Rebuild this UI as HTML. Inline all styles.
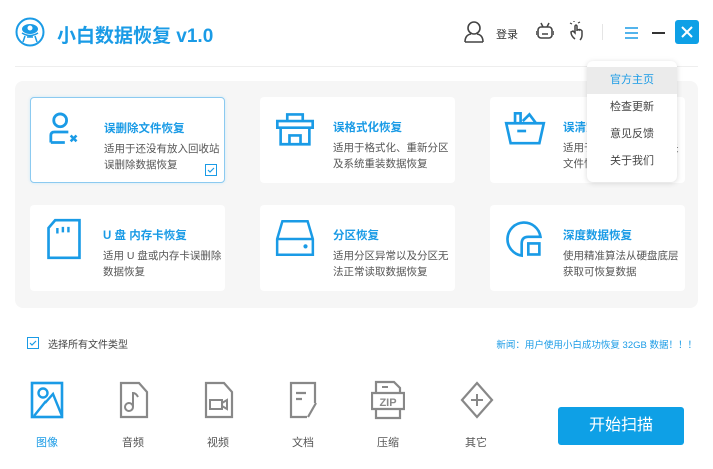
<!DOCTYPE html>
<html><head><meta charset="utf-8"><style>
*{margin:0;padding:0;box-sizing:border-box}
body{width:713px;height:469px;background:#fff;font-family:"Liberation Sans","Noto Sans CJK SC",sans-serif;position:relative;overflow:hidden;color:#333}
.a{position:absolute}
.title{left:57px;top:21px;font-size:19px;font-weight:bold;color:#1a9be6;letter-spacing:0px}
.sep{left:15px;top:66px;width:683px;height:1px;background:#eee}
.panel{left:15px;top:81px;width:683px;height:227px;background:#f6f6f6;border-radius:8px}
.card{position:absolute;width:195px;height:86px;background:#fff;border-radius:4px}
.card.sel{border:1px solid #8ccaf0;box-shadow:0 0 3px #cde8f8}
.card svg{position:absolute;left:14px;top:13px}
.card .t{position:absolute;left:73px;top:22px;font-size:11.5px;color:#1a9be6;font-weight:bold}
.card .d{position:absolute;left:73px;top:43px;font-size:10.5px;color:#555;line-height:16px;width:120px}
.menu{left:587px;top:61px;width:90px;height:121px;background:#fff;border-radius:6px;box-shadow:0 1px 6px rgba(0,0,0,.15)}
.menu div{height:27px;line-height:27px;text-align:center;font-size:11px;color:#444}
.ft{position:absolute;font-size:11px;color:#555;width:60px;text-align:center;top:434px}
.btn{left:558px;top:407px;width:126px;height:38px;background:#0ea0e6;border-radius:3px;color:#fff;font-size:16px;text-align:center;line-height:38px}
</style></head><body>
<svg class="a" style="left:15px;top:17px" width="30" height="30" viewBox="0 0 30 30"><circle cx="15" cy="15" r="13.5" fill="#fff" stroke="#1a9be6" stroke-width="2"/><ellipse cx="15" cy="12" rx="8" ry="5" fill="#1a9be6"/><circle cx="15" cy="11" r="2.5" fill="#fff"/><path d="M7 16q8 5 16 0M10 19l-2 6M20 19l2 6M12 20h6" stroke="#1a9be6" stroke-width="1.5" fill="none"/></svg>
<div class="a title">小白数据恢复 v1.0</div>
<svg class="a" style="left:463px;top:20px" width="22" height="24" viewBox="0 0 22 24"><circle cx="11" cy="8" r="6" fill="none" stroke="#444" stroke-width="1.6"/><path d="M2 22q0-7 6-8M20 22q0-7-6-8M2 22h18" fill="none" stroke="#444" stroke-width="1.6"/></svg>
<div class="a" style="left:496px;top:26px;font-size:11px;color:#333">登录</div>
<svg class="a" style="left:536px;top:22px" width="18" height="19" viewBox="0 0 18 19"><path d="M5 1l2 4M13 1l-2 4" stroke="#444" stroke-width="1.5"/><rect x="2" y="5" width="14" height="11" rx="3" fill="none" stroke="#444" stroke-width="1.6"/><path d="M0 9v4M18 9v4M6 12h6" stroke="#444" stroke-width="1.6"/></svg>
<svg class="a" style="left:569px;top:21px" width="16" height="20" viewBox="0 0 16 20"><path d="M6 18q-4-3-4-7l2-1 2 2V5q1-2 2 0v5q0-2 2-1 0-1 2 0l1 1v4q0 3-2 5" fill="none" stroke="#444" stroke-width="1.5"/><path d="M3 3l-2-1M5 1v-1M9 2l2-1" stroke="#444" stroke-width="1.2"/></svg>
<div class="a" style="left:602px;top:24px;width:1px;height:16px;background:#e5e5e5"></div>
<svg class="a" style="left:625px;top:27px" width="13" height="12"><path d="M0 1h13M0 6h13M0 11h13" stroke="#1a9be6" stroke-width="1.6"/></svg>
<div class="a" style="left:652px;top:32px;width:13px;height:2px;background:#333"></div>
<div class="a" style="left:675px;top:20px;width:24px;height:24px;background:#0ea0e6;border-radius:3px"><svg width="24" height="24"><path d="M7 7l10 10M17 7L7 17" stroke="#fff" stroke-width="2"/></svg></div>
<div class="a sep"></div>
<div class="a panel">
<div class="card sel" style="left:15px;top:16px"><svg width="42" height="42" viewBox="0 0 36 36"><circle cx="13" cy="8" r="5.5" fill="none" stroke="#1a9be6" stroke-width="2.4"/><path d="M5 27v-6q0-3 3-3h12M5 27h12" fill="none" stroke="#1a9be6" stroke-width="2.4"/><path d="M22 21l5 5M27 21l-5 5" stroke="#1a9be6" stroke-width="2.2"/></svg><div class="t">误删除文件恢复</div><div class="d">适用于还没有放入回收站误删除数据恢复</div><svg style="left:174px;top:66px" width="12" height="12"><rect x=".5" y=".5" width="11" height="11" fill="none" stroke="#1a9be6"/><path d="M3 6l2 2 4-4" fill="none" stroke="#1a9be6" stroke-width="1.2"/></svg></div>
<div class="card" style="left:245px;top:16px"><svg width="42" height="42" viewBox="0 0 38 38"><path d="M12 4h14v6h9v6h-3v15H6V16H3v-6h9zM12 10h14M6 16h26M14 31v-8h10v8" fill="none" stroke="#1a9be6" stroke-width="2.4"/></svg><div class="t">误格式化恢复</div><div class="d">适用于格式化、重新分区及系统重装数据恢复</div></div>
<div class="card" style="left:475px;top:16px"><svg width="42" height="42" viewBox="0 0 38 38"><path d="M2 12h34l-4 18H6zM10 12V3h5v9M17 10l6-6 6 8" fill="none" stroke="#1a9be6" stroke-width="2.4"/><path d="M12 19h8" stroke="#1a9be6" stroke-width="2.4"/></svg><div class="t">误清空回收站</div><div class="d">适用于清空回收站后丢失文件恢复</div></div>
<div class="card" style="left:15px;top:124px"><svg width="40" height="42" viewBox="0 0 36 38"><path d="M10 2h22v34H4V9z" fill="none" stroke="#1a9be6" stroke-width="2.4"/><path d="M12 9v5M17 8v5M22 8v5" stroke="#1a9be6" stroke-width="2.2"/></svg><div class="t">U 盘 内存卡恢复</div><div class="d">适用 U 盘或内存卡误删除数据恢复</div></div>
<div class="card" style="left:245px;top:124px"><svg width="42" height="40" viewBox="0 0 40 38"><path d="M8 3h24l5 17v15H3V20zM3 20h34" fill="none" stroke="#1a9be6" stroke-width="2.4"/><circle cx="30" cy="27" r="2" fill="#1a9be6"/></svg><div class="t">分区恢复</div><div class="d">适用分区异常以及分区无法正常读取数据恢复</div></div>
<div class="card" style="left:475px;top:124px"><svg width="42" height="42" viewBox="0 0 38 38"><path d="M16 34A15 15 0 1 1 33 17H22q-6 0-6 6z" fill="none" stroke="#1a9be6" stroke-width="2.4"/><rect x="22" y="23" width="10" height="10" fill="none" stroke="#1a9be6" stroke-width="2.4"/></svg><div class="t">深度数据恢复</div><div class="d">使用精准算法从硬盘底层获取可恢复数据</div></div>
</div>
<div class="a menu" style="padding-top:6px"><div style="background:#ebebeb;color:#1a9be6">官方主页</div><div>检查更新</div><div>意见反馈</div><div>关于我们</div></div>
<svg class="a" style="left:27px;top:337px" width="12" height="12"><rect x=".5" y=".5" width="11" height="11" fill="none" stroke="#1a9be6"/><path d="M3 6l2 2 4-4" fill="none" stroke="#1a9be6" stroke-width="1.2"/></svg>
<div class="a" style="left:48px;top:336px;font-size:10px;color:#444">选择所有文件类型</div>
<div class="a" style="right:16px;top:337px;font-size:9.5px;color:#1a9be6">新闻：用户使用小白成功恢复 32GB 数据！！！</div>
<svg class="a" style="left:30px;top:381px" width="35" height="38" viewBox="0 0 35 38"><rect x="2" y="2" width="30" height="34" fill="none" stroke="#1a9be6" stroke-width="2.6"/><circle cx="13" cy="12" r="4.5" fill="none" stroke="#1a9be6" stroke-width="2.4"/><path d="M4 35l12-15M15 22l8-9 9 22" fill="none" stroke="#1a9be6" stroke-width="2.4"/></svg>
<svg class="a" style="left:119px;top:381px" width="30" height="38" viewBox="0 0 30 38"><path d="M2 2h18l8 9v25H2z" fill="none" stroke="#888" stroke-width="2.2"/><circle cx="10" cy="26" r="4" fill="none" stroke="#888" stroke-width="2"/><path d="M14 26V12q3 0 5 4" fill="none" stroke="#888" stroke-width="2"/></svg>
<svg class="a" style="left:204px;top:381px" width="30" height="38" viewBox="0 0 30 38"><path d="M2 2h18l8 9v25H2z" fill="none" stroke="#888" stroke-width="2.2"/><rect x="6" y="19" width="12" height="9" fill="none" stroke="#888" stroke-width="2"/><path d="M18 22l5-3v9l-5-3" fill="none" stroke="#888" stroke-width="2"/></svg>
<svg class="a" style="left:289px;top:381px" width="30" height="38" viewBox="0 0 30 38"><path d="M18 36H2V2h24v20" fill="none" stroke="#888" stroke-width="2.2"/><path d="M7 12h10M7 18h6M27 22l-8 14" stroke="#888" stroke-width="2.2"/></svg>
<svg class="a" style="left:371px;top:380px" width="34" height="40" viewBox="0 0 34 40"><path d="M5 12V2h18l6 6v4M5 30v8h24v-8M1 13h32v16H1z" fill="none" stroke="#888" stroke-width="2.2"/><path d="M11 7h6" stroke="#888" stroke-width="2"/><text x="17" y="26" text-anchor="middle" font-size="11" font-weight="bold" fill="#888" font-family="Liberation Sans">ZIP</text></svg>
<svg class="a" style="left:458px;top:381px" width="38" height="38" viewBox="0 0 38 38"><path d="M19 2l15 17-15 17L4 19z" fill="none" stroke="#888" stroke-width="2.2"/><path d="M19 13v12M13 19h12" stroke="#888" stroke-width="2"/></svg>
<div class="ft" style="left:17px;color:#1a9be6">图像</div>
<div class="ft" style="left:103px">音频</div>
<div class="ft" style="left:188px">视频</div>
<div class="ft" style="left:273px">文档</div>
<div class="ft" style="left:358px">压缩</div>
<div class="ft" style="left:446px">其它</div>
<div class="a btn">开始扫描</div>
</body></html>
